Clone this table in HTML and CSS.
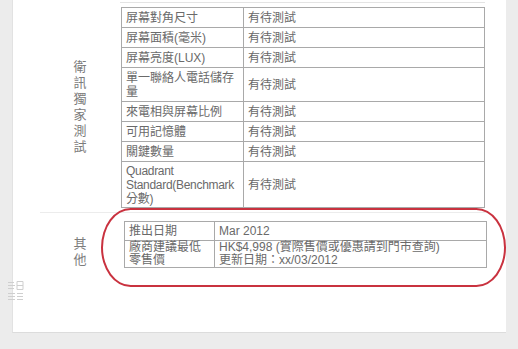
FILE: index.html
```html
<!DOCTYPE html>
<html>
<head>
<meta charset="utf-8">
<link rel="stylesheet" href="styles.css">
</head>
<body>
<div class="panel">
  <div class="section s1">
    <div class="label">衛<br>訊<br>獨<br>家<br>測<br>試</div>
    <div class="content top">
      <table class="spec t1">
        <colgroup><col class="c1"><col></colgroup>
        <tr><td>屏幕對角尺寸</td><td>有待測試</td></tr>
        <tr><td>屏幕面積(毫米)</td><td>有待測試</td></tr>
        <tr><td>屏幕亮度(LUX)</td><td>有待測試</td></tr>
        <tr><td>單一聯絡人電話儲存量</td><td>有待測試</td></tr>
        <tr><td>來電相與屏幕比例</td><td>有待測試</td></tr>
        <tr><td>可用記憶體</td><td>有待測試</td></tr>
        <tr><td>關鍵數量</td><td>有待測試</td></tr>
        <tr><td class="narrow">Quadrant Standard(Benchmark 分數)</td><td>有待測試</td></tr>
      </table>
    </div>
  </div>
  <div class="section s2">
    <div class="label">其<br>他</div>
    <div class="content">
      <table class="spec t2">
        <colgroup><col class="c2"><col></colgroup>
        <tr><td>推出日期</td><td>Mar 2012</td></tr>
        <tr class="tight"><td>廠商建議最低零售價</td><td>HK$4,998 (實際售價或優惠請到門市查詢)<br>更新日期：xx/03/2012</td></tr>
      </table>
    </div>
  </div>
  <div class="highlight"></div>
  <svg class="icon" width="17" height="24" viewBox="0 0 17 24">
    <g stroke="#cfcfcf" stroke-width="1" fill="none">
      <path d="M1 3.5h6M1 6.5h7M1 9.5h6M10 2.5h6v8h-6zM10 6.5h6"/>
      <path d="M1 14.5h7M1 17.5h7M1 20.5h7M10 14.5h6M10 17.5h6M10 20.5h6"/>
    </g>
  </svg>
</div>
</body>
</html>
```
FILE: styles.css
```css
html, body {
  margin: 0;
  padding: 0;
}
body {
  background: #ececec;
  width: 518px;
  height: 349px;
  overflow: hidden;
  font-family: "Liberation Sans", "Noto Sans CJK TC", sans-serif;
  font-size: 12px;
  color: #6a6a6a;
}
.panel {
  position: relative;
  margin-left: 12px;
  width: 494px;
  height: 333px;
  background: #fff;
  border-left: 1px solid #e2e2e2;
  border-bottom: 1px solid #dcdcdc;
  padding: 2px 0 0 27px;
  box-sizing: border-box;
}
.section {
  display: flex;
  width: 445px;
}
.label {
  width: 80px;
  flex: none;
  display: flex;
  align-items: center;
  justify-content: center;
  text-align: center;
  font-size: 13px;
  line-height: 16px;
  color: #7c7c7c;
}
.content {
  flex: 1;
}
.content.top {
  border-top: 1px solid #e4e4e4;
}
.s1 {
  padding-bottom: 4px;
  border-bottom: 1px solid #ececec;
}
.s1 .label {
  padding-top: 4px;
}
.s2 {
  padding-top: 8px;
}
.s2 .label {
  padding-top: 14px;
  padding-right: 2px;
}
.spec {
  border-collapse: collapse;
  table-layout: fixed;
  width: 364px;
}
.t1 {
  margin-top: 4px;
  margin-left: 1px;
}
.t2 {
  margin-left: 2px;
  width: 363px;
}
.c1 { width: 122px; }
.c2 { width: 90px; }
.spec td {
  border: 1px solid #a9a9a9;
  padding: 3px 1px 2px 4px;
  line-height: 14px;
  vertical-align: middle;
}
.spec td.narrow {
  letter-spacing: -0.3px;
  padding-top: 2px;
  padding-bottom: 1px;
}
.t2 td {
  line-height: 13px;
  padding: 3px 5px 2px 4px;
}
.t2 tr.tight td {
  padding-top: 0;
  padding-bottom: 0;
}
.highlight {
  position: absolute;
  left: 88px;
  top: 208px;
  width: 405px;
  height: 79px;
  box-sizing: border-box;
  border: 2px solid #c9323f;
  border-radius: 30px / 40px;
  pointer-events: none;
}
.icon {
  position: absolute;
  left: -6px;
  top: 279px;
}
```
